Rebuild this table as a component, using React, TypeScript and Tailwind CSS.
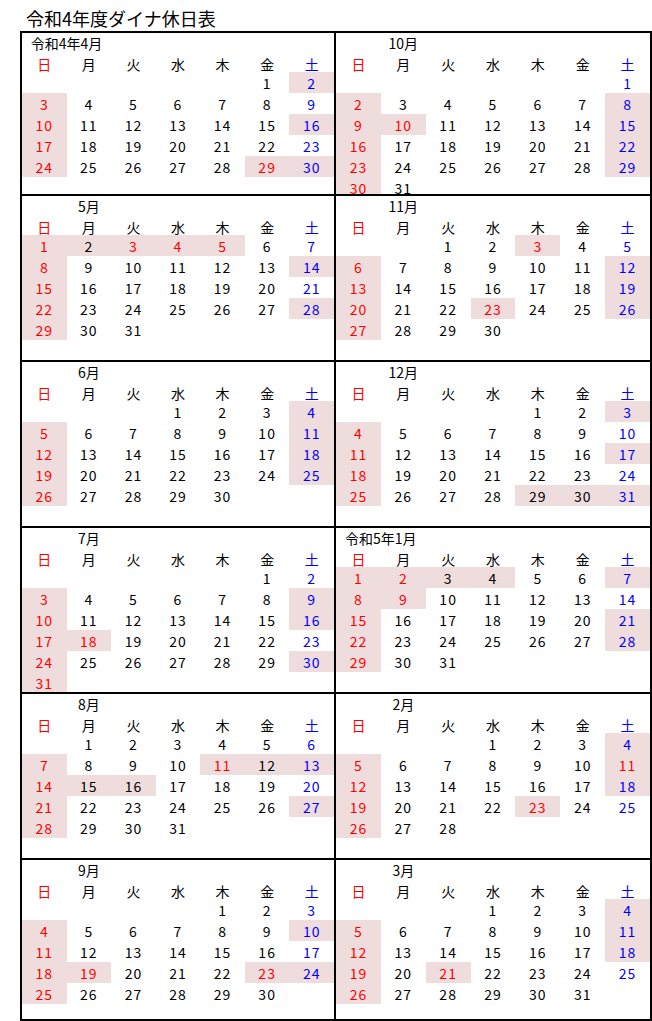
import React from "react";

type Month = {
  label: string;
  wide?: boolean;
  start: number; // weekday of the 1st, 0 = Sunday
  days: number;
  off: number[]; // shaded days
  red: number[]; // holidays shown in red
};

const WEEK = ["日", "月", "火", "水", "木", "金", "土"];

const left: Month[] = [
  { label: "令和4年4月", wide: true, start: 5, days: 30, off: [2, 3, 10, 16, 17, 24, 29, 30], red: [29] },
  { label: "5月", start: 0, days: 31, off: [1, 2, 3, 4, 5, 8, 14, 15, 22, 28, 29], red: [3, 4, 5] },
  { label: "6月", start: 3, days: 30, off: [4, 5, 11, 12, 18, 19, 25, 26], red: [] },
  { label: "7月", start: 5, days: 31, off: [3, 9, 10, 16, 17, 18, 24, 30, 31], red: [18] },
  { label: "8月", start: 1, days: 31, off: [7, 11, 12, 13, 14, 15, 16, 21, 27, 28], red: [11] },
  { label: "9月", start: 4, days: 30, off: [4, 10, 11, 18, 19, 23, 24, 25], red: [19, 23] },
];

const right: Month[] = [
  { label: "10月", start: 6, days: 31, off: [2, 8, 9, 10, 15, 16, 22, 23, 29, 30], red: [10] },
  { label: "11月", start: 2, days: 30, off: [3, 6, 12, 13, 19, 20, 23, 26, 27], red: [3, 23] },
  { label: "12月", start: 4, days: 31, off: [3, 4, 11, 17, 18, 25, 29, 30, 31], red: [] },
  { label: "令和5年1月", wide: true, start: 0, days: 31, off: [1, 2, 3, 4, 7, 8, 9, 15, 21, 22, 28, 29], red: [2, 9] },
  { label: "2月", start: 3, days: 28, off: [4, 5, 11, 12, 18, 19, 23, 26], red: [11, 23] },
  { label: "3月", start: 3, days: 31, off: [4, 5, 11, 12, 18, 19, 21, 26], red: [21] },
];

// border-box heights: the bottom rule is included
const heights = ["h-[163px]", "h-[166px]", "h-[166px]", "h-[166px]", "h-[166px]", "h-[159px]"];

function MonthBlock({ m, height, border }: { m: Month; height: string; border: string }) {
  const cells: (number | null)[] = [];
  for (let i = 0; i < m.start; i++) cells.push(null);
  for (let d = 1; d <= m.days; d++) cells.push(d);

  return (
    <div className={`${height} ${border} border-black overflow-hidden`}>
      <div className="grid grid-cols-7 h-[20px] leading-[20px]">
        {m.wide ? (
          <div className="col-span-2 text-center whitespace-nowrap">{m.label}</div>
        ) : (
          <div className="col-start-2 text-center whitespace-nowrap">{m.label}</div>
        )}
      </div>
      <div className="grid grid-cols-7 h-[19px] leading-[22px]">
        {WEEK.map((w, i) => (
          <div
            key={w}
            className={`text-center ${
              i === 0 ? "text-[#ff0000]" : i === 6 ? "text-[#0000ff]" : "text-black"
            }`}
          >
            {w}
          </div>
        ))}
      </div>
      <div className="grid grid-cols-7 auto-rows-[21px] leading-[23px]">
        {cells.map((d, i) => {
          if (d === null) return <div key={`e${i}`} />;
          const wd = i % 7;
          const isRed = wd === 0 || m.red.includes(d);
          const color = isRed ? "text-[#ff0000]" : wd === 6 ? "text-[#0000ff]" : "text-black";
          const bg = m.off.includes(d) ? "bg-[#efdcdc]" : "";
          return (
            <div key={d} className={`text-center tracking-[1px] ${color} ${bg}`}>
              {d}
            </div>
          );
        })}
      </div>
    </div>
  );
}

export default function App() {
  return (
    <div className="w-[652px] bg-white text-black font-['Noto_Sans_CJK_JP','Noto_Sans_CJK_SC',sans-serif]">
      <div className="h-[31px] pl-[26px] text-[18px] leading-[36px]">令和4年度ダイナ休日表</div>
      <div className="ml-[20px] w-[632px] border-2 border-black grid grid-cols-2 text-[14px]">
        {left.map((m, i) => {
          const last = i === left.length - 1;
          return (
            <React.Fragment key={m.label}>
              <MonthBlock m={m} height={heights[i]} border={`border-r-2 ${last ? "" : "border-b-2"}`} />
              <MonthBlock m={right[i]} height={heights[i]} border={last ? "" : "border-b-2"} />
            </React.Fragment>
          );
        })}
      </div>
    </div>
  );
}
